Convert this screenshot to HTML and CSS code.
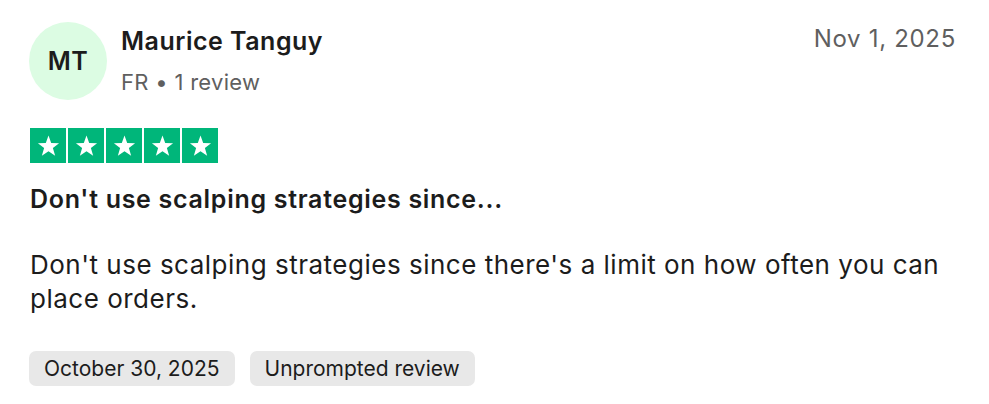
FILE: index.html
```html
<!DOCTYPE html>
<html>
<head>
<meta charset="utf-8">
<link rel="stylesheet" href="styles.css">
</head>
<body>
<article class="review">
  <header class="head">
    <div class="avatar">MT</div>
    <div class="who">
      <div class="name">Maurice Tanguy</div>
      <div class="meta">FR • 1 review</div>
    </div>
    <time class="date">Nov 1, 2025</time>
  </header>
  <div class="stars">
    <span class="star"><svg viewBox="0 0 24 24"><path d="M12 3.2l2.4 6.6 7 .2-5.5 4.3 2 6.8L12 17.2l-5.9 3.9 2-6.8L2.6 10l7-.2z" fill="#fff"/></svg></span>
    <span class="star"><svg viewBox="0 0 24 24"><path d="M12 3.2l2.4 6.6 7 .2-5.5 4.3 2 6.8L12 17.2l-5.9 3.9 2-6.8L2.6 10l7-.2z" fill="#fff"/></svg></span>
    <span class="star"><svg viewBox="0 0 24 24"><path d="M12 3.2l2.4 6.6 7 .2-5.5 4.3 2 6.8L12 17.2l-5.9 3.9 2-6.8L2.6 10l7-.2z" fill="#fff"/></svg></span>
    <span class="star"><svg viewBox="0 0 24 24"><path d="M12 3.2l2.4 6.6 7 .2-5.5 4.3 2 6.8L12 17.2l-5.9 3.9 2-6.8L2.6 10l7-.2z" fill="#fff"/></svg></span>
    <span class="star"><svg viewBox="0 0 24 24"><path d="M12 3.2l2.4 6.6 7 .2-5.5 4.3 2 6.8L12 17.2l-5.9 3.9 2-6.8L2.6 10l7-.2z" fill="#fff"/></svg></span>
  </div>
  <h2 class="title">Don't use scalping strategies since...</h2>
  <p class="body">Don't use scalping strategies since there's a limit on how often you can place orders.</p>
  <div class="tags">
    <span class="tag">October 30, 2025</span>
    <span class="tag">Unprompted review</span>
  </div>
</article>
</body>
</html>
```
FILE: styles.css
```css
* { box-sizing: border-box; }
html, body { margin: 0; background: #ffffff; }
body {
  font-family: Inter, "Noto Sans", sans-serif;
  color: #1c1c1c;
}
.review {
  padding: 22px 33px 0 29px;
  width: 989px;
}
.head {
  display: flex;
  align-items: flex-start;
  height: 78px;
}
.avatar {
  width: 78px;
  height: 78px;
  border-radius: 50%;
  background: #dcfce3;
  display: flex;
  align-items: center;
  justify-content: center;
  font-size: 25px;
  font-weight: 600;
  letter-spacing: 0.5px;
  color: #1c1c1c;
  flex: none;
}
.who {
  margin-left: 14px;
  flex: 1;
}
.name {
  font-size: 25px;
  font-weight: 600;
  line-height: 30px;
  letter-spacing: 0.5px;
  margin-top: 4px;
}
.meta {
  font-size: 22px;
  line-height: 28px;
  letter-spacing: 0.3px;
  color: #5f5f5f;
  margin-top: 12px;
}
.date {
  font-size: 24px;
  line-height: 30px;
  letter-spacing: 0.7px;
  color: #5f5f5f;
  margin-top: 2px;
}
.stars {
  display: flex;
  gap: 2px;
  margin-top: 28px;
  margin-left: 1px;
}
.star {
  width: 36px;
  height: 35px;
  background: #00b67a;
  display: flex;
  align-items: center;
  justify-content: center;
}
.star svg { width: 27px; height: 27px; }
.title {
  font-size: 25px;
  font-weight: 600;
  letter-spacing: 0.7px;
  line-height: 32px;
  margin: 20px 0 0 1px;
}
.body {
  font-size: 26px;
  line-height: 34px;
  letter-spacing: 0.5px;
  margin: 33px 0 0 1px;
}
.tags {
  display: flex;
  gap: 15px;
  margin-top: 35px;
}
.tag {
  background: #e8e8e8;
  border-radius: 7px;
  padding: 0 15px;
  height: 35px;
  display: flex;
  align-items: center;
  font-size: 21px;
  letter-spacing: 0;
  color: #1c1c1c;
}
```
